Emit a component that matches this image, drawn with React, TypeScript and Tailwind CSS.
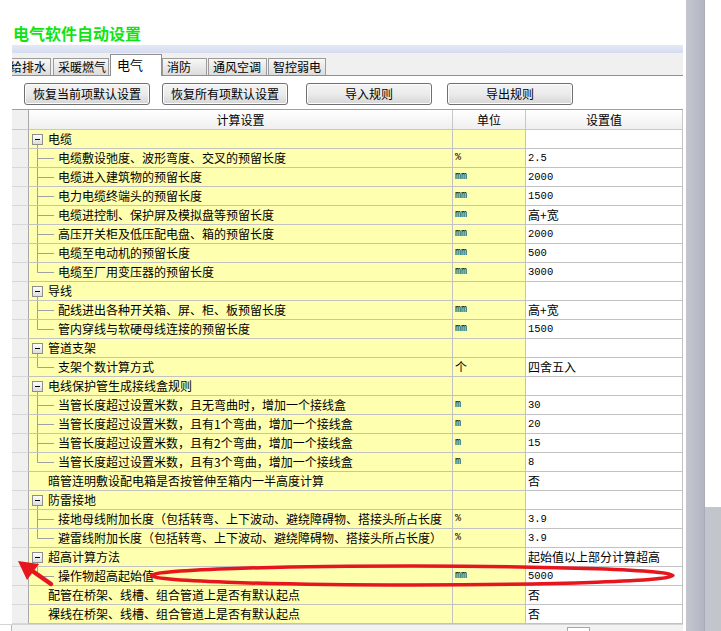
import React from "react";

type Row =
  | { kind: "group"; label: string; value?: string }
  | { kind: "child"; label: string; unit?: string; value?: string; last?: boolean }
  | { kind: "plain"; label: string; unit?: string; value?: string };

const rows: Row[] = [
  { kind: "group", label: "电缆" },
  { kind: "child", label: "电缆敷设弛度、波形弯度、交叉的预留长度", unit: "%", value: "2.5" },
  { kind: "child", label: "电缆进入建筑物的预留长度", unit: "mm", value: "2000" },
  { kind: "child", label: "电力电缆终端头的预留长度", unit: "mm", value: "1500" },
  { kind: "child", label: "电缆进控制、保护屏及模拟盘等预留长度", unit: "mm", value: "高+宽" },
  { kind: "child", label: "高压开关柜及低压配电盘、箱的预留长度", unit: "mm", value: "2000" },
  { kind: "child", label: "电缆至电动机的预留长度", unit: "mm", value: "500" },
  { kind: "child", label: "电缆至厂用变压器的预留长度", unit: "mm", value: "3000", last: true },
  { kind: "group", label: "导线" },
  { kind: "child", label: "配线进出各种开关箱、屏、柜、板预留长度", unit: "mm", value: "高+宽" },
  { kind: "child", label: "管内穿线与软硬母线连接的预留长度", unit: "mm", value: "1500", last: true },
  { kind: "group", label: "管道支架" },
  { kind: "child", label: "支架个数计算方式", unit: "个", value: "四舍五入", last: true },
  { kind: "group", label: "电线保护管生成接线盒规则" },
  { kind: "child", label: "当管长度超过设置米数，且无弯曲时，增加一个接线盒", unit: "m", value: "30" },
  { kind: "child", label: "当管长度超过设置米数，且有1个弯曲，增加一个接线盒", unit: "m", value: "20" },
  { kind: "child", label: "当管长度超过设置米数，且有2个弯曲，增加一个接线盒", unit: "m", value: "15" },
  { kind: "child", label: "当管长度超过设置米数，且有3个弯曲，增加一个接线盒", unit: "m", value: "8", last: true },
  { kind: "plain", label: "暗管连明敷设配电箱是否按管伸至箱内一半高度计算", value: "否" },
  { kind: "group", label: "防雷接地" },
  { kind: "child", label: "接地母线附加长度（包括转弯、上下波动、避绕障碍物、搭接头所占长度", unit: "%", value: "3.9" },
  { kind: "child", label: "避雷线附加长度（包括转弯、上下波动、避绕障碍物、搭接头所占长度）", unit: "%", value: "3.9", last: true },
  { kind: "group", label: "超高计算方法", value: "起始值以上部分计算超高" },
  { kind: "child", label: "操作物超高起始值", unit: "mm", value: "5000", last: true },
  { kind: "plain", label: "配管在桥架、线槽、组合管道上是否有默认起点", value: "否" },
  { kind: "plain", label: "裸线在桥架、线槽、组合管道上是否有默认起点", value: "否" },
];

const tabs = [
  { label: "给排水", w: "w-[39px]", ml: "ml-0", clip: true },
  { label: "采暖燃气", w: "w-[56px]", ml: "ml-[2px]" },
  { label: "电气", w: "w-[52px]", ml: "ml-[1px]", active: true },
  { label: "消防", w: "w-[45px]", ml: "ml-0" },
  { label: "通风空调", w: "w-[59px]", ml: "ml-[1px]" },
  { label: "智控弱电", w: "w-[58px]", ml: "ml-[1px]" },
];

function GroupIcon() {
  return (
    <svg width="19" height="18" className="shrink-0">
      <defs>
        <linearGradient id="boxg" x1="0" y1="0" x2="0" y2="1">
          <stop offset="0" stopColor="#ffffff" />
          <stop offset="1" stopColor="#dcdcdc" />
        </linearGradient>
      </defs>
      <line x1="8.5" y1="15" x2="8.5" y2="18" stroke="#a0a0a0" />
      <rect x="3.5" y="4.5" width="10" height="10" fill="url(#boxg)" stroke="#8e8e8e" />
      <line x1="6" y1="9.5" x2="11" y2="9.5" stroke="#000" />
    </svg>
  );
}

function ChildIcon({ last }: { last?: boolean }) {
  return (
    <svg width="29" height="18" className="shrink-0">
      <line x1="8.5" y1="0" x2="8.5" y2={last ? 9.5 : 18} stroke="#a0a0a0" />
      <line x1="8.5" y1="9.5" x2="25" y2="9.5" stroke="#a0a0a0" />
    </svg>
  );
}

function Value({ v }: { v?: string }) {
  if (!v) return null;
  if (/^[\d.]+$/.test(v)) {
    return <span className="font-['Liberation_Mono',monospace] text-[10.5px]">{v}</span>;
  }
  return <span>{v}</span>;
}

function Unit({ u }: { u?: string }) {
  if (!u) return null;
  if (u === "个") return <span className="text-[12px]">{u}</span>;
  return <span className="font-['Liberation_Mono',monospace] text-[10px]">{u}</span>;
}

function TableRow({ row }: { row: Row }) {
  return (
    <div className="flex h-[19px]">
      <div className="w-[17px] shrink-0 bg-[#f0f0f0] border-r border-r-[#a8a8a8] border-b border-b-[#d8d8d8]" />
      <div className="w-[424px] shrink-0 bg-[#ffffb0] border-r border-b border-[#c2c2c2] flex items-center overflow-hidden whitespace-nowrap">
        {row.kind === "group" && <GroupIcon />}
        {row.kind === "child" && <ChildIcon last={row.last} />}
        {row.kind === "plain" && <div className="w-[19px] shrink-0" />}
        <span className="leading-[18px]">{row.label}</span>
      </div>
      <div className="w-[73px] shrink-0 bg-[#ffffb0] border-r border-b border-[#c2c2c2] flex items-center pl-[2px] leading-[18px]">
        {row.kind !== "group" && <Unit u={(row as any).unit} />}
      </div>
      <div className="w-[157px] shrink-0 bg-white border-r border-b border-[#c2c2c2] flex items-center pl-[2px] leading-[18px] whitespace-nowrap overflow-hidden">
        <Value v={row.value} />
      </div>
    </div>
  );
}

export default function App() {
  return (
    <div className="relative w-[721px] h-[631px] overflow-hidden bg-white flex font-['Noto_Sans_CJK_SC',sans-serif] text-[12px] text-black">
      {/* main column */}
      <div className="w-[683px] shrink-0 flex flex-col">
        <div className="h-[45px] pl-[13px] pt-[23px]">
          <div className="text-[16px] leading-[20px] font-bold text-[#12e312]">电气软件自动设置</div>
        </div>
        <div className="pl-[12px] flex flex-col">
          {/* blue band */}
          <div className="h-[8px] bg-gradient-to-b from-[#e4e9f6] to-[#d5dcf0]" />
          {/* tabs */}
          <div className="h-[23px] bg-[#f0f0f0] border-b border-[#8f8f8f] flex items-end">
            {tabs.map((t) =>
              t.active ? (
                <div
                  key={t.label}
                  className={`${t.w} ${t.ml} relative z-10 h-[22px] -mb-px bg-white border border-b-0 border-[#8f8f8f] pl-[6px] pt-[1px] leading-[18px] text-[13px] shrink-0`}
                >
                  {t.label}
                </div>
              ) : (
                <div
                  key={t.label}
                  className={`${t.w} ${t.ml} h-[17px] shrink-0 bg-gradient-to-b from-[#f7f7f7] to-[#dcdcdc] border border-b-0 border-[#9c9c9c] leading-[16px] overflow-hidden whitespace-nowrap ${t.clip ? "border-l-0" : "pl-[4px]"}`}
                >
                  <span className={t.clip ? "ml-[-2px]" : ""}>{t.label}</span>
                </div>
              )
            )}
          </div>
          {/* buttons */}
          <div className="h-[33px] pt-[7px] flex">
            {[
              { label: "恢复当前项默认设置", ml: "ml-[12px]" },
              { label: "恢复所有项默认设置", ml: "ml-[12px]" },
              { label: "导入规则", ml: "ml-[18px]" },
              { label: "导出规则", ml: "ml-[15px]" },
            ].map((b) => (
              <div
                key={b.label}
                className={`${b.ml} w-[126px] h-[22px] rounded-[3px] border border-[#707070] bg-gradient-to-b from-[#f4f4f4] via-[#ebebeb] to-[#d6d6d6] flex items-center justify-center leading-[18px] shadow-[inset_0_0_0_1px_#fcfcfc]`}
              >
                {b.label}
              </div>
            ))}
          </div>
          {/* table */}
          <div className="border-t border-[#a0a0a0] flex flex-col">
            <div className="flex h-[20px]">
              <div className="w-[17px] shrink-0 bg-[#f0f0f0] border-r border-r-[#a8a8a8] border-b border-b-[#c8c8c8]" />
              <div className="w-[424px] shrink-0 bg-gradient-to-b from-white to-[#efefef] border-r border-b border-[#c8c8c8] flex items-center justify-center leading-[18px]">
                计算设置
              </div>
              <div className="w-[73px] shrink-0 bg-gradient-to-b from-white to-[#efefef] border-r border-b border-[#c8c8c8] flex items-center justify-center leading-[18px]">
                单位
              </div>
              <div className="w-[157px] shrink-0 bg-gradient-to-b from-white to-[#efefef] border-r border-b border-[#c8c8c8] flex items-center justify-center leading-[18px]">
                设置值
              </div>
            </div>
            {rows.map((r, i) => (
              <TableRow key={i} row={r} />
            ))}
          </div>
        </div>
        {/* bottom strip */}
        <div className="flex-1 bg-[#f2f2f2] border-t border-[#d4d4d4] flex">
          <div className="w-[12px] border-r border-[#b8b8b8] bg-white" />
          <div className="ml-[555px] mt-[2px] w-[23px] border border-b-0 border-[#a8a8a8] bg-white" />
        </div>
      </div>
      {/* gap */}
      <div className="w-[3px] shrink-0 bg-white" />
      {/* gray vertical strip */}
      <div className="w-[19px] shrink-0 bg-gradient-to-r from-[#c3c6cf] via-[#bcbfca] to-[#b3b6c2] border-r border-[#a9acb8]" />
      {/* far right */}
      <div className="flex-1 flex flex-col">
        <div className="h-[507px] bg-white" />
        <div className="flex-1 bg-[#c3c5cd]" />
      </div>

      {/* red annotation overlay */}
      <svg className="absolute inset-0 pointer-events-none" width="721" height="631">
        <ellipse cx="412" cy="575.5" rx="261" ry="9.5" fill="none" stroke="#e5161e" strokeWidth="3.5" />
        <line x1="31" y1="570" x2="51" y2="584" stroke="#e5161e" strokeWidth="4.5" strokeLinecap="round" />
        <polygon points="18,561 27,580 39,564" fill="#e5161e" />
      </svg>
    </div>
  );
}
